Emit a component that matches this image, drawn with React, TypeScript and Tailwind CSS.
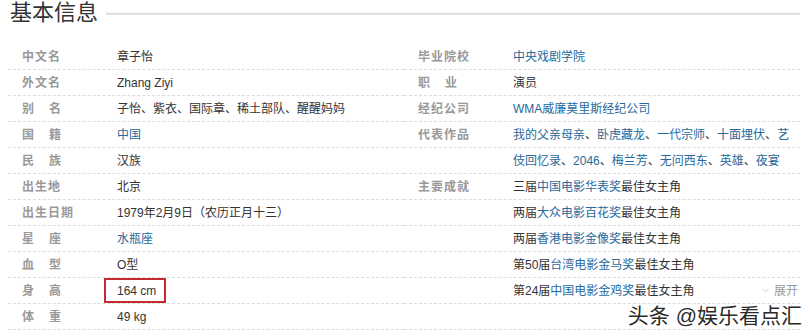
import { ChevronDown } from "lucide-react";
import type { ReactNode } from "react";

const font = { fontFamily: '"Liberation Sans", "Noto Sans CJK SC", sans-serif' };

function A({ children }: { children: ReactNode }) {
  return <span className="text-[#27699b]">{children}</span>;
}

function Label({ text }: { text: string }) {
  // two-char labels are spread to the width of three chars
  if (text.length === 2) {
    return (
      <div className="w-[95px] shrink-0">
        <div className="flex w-[39px] justify-between font-bold text-[#999]">
          <span>{text[0]}</span>
          <span>{text[1]}</span>
        </div>
      </div>
    );
  }
  return <div className="w-[95px] shrink-0 font-bold tracking-[1px] text-[#999]">{text}</div>;
}

function Row({ label, children }: { label?: string; children?: ReactNode }) {
  return (
    <div className="flex h-[26px] items-center border-b border-dashed border-[#dcdcdc] pl-[14px] text-[12px] text-[#333]">
      {label ? <Label text={label} /> : <div className="w-[95px] shrink-0" />}
      {children}
    </div>
  );
}

const left: [string, ReactNode][] = [
  ["中文名", "章子怡"],
  ["外文名", "Zhang Ziyi"],
  ["别名", "子怡、紫衣、国际章、稀土部队、醒醒妈妈"],
  ["国籍", <A>中国</A>],
  ["民族", "汉族"],
  ["出生地", "北京"],
  ["出生日期", "1979年2月9日（农历正月十三）"],
  ["星座", <A>水瓶座</A>],
  ["血型", "O型"],
  [
    "身高",
    <div className="relative flex h-[26px] items-center">
      164 cm
      <span className="absolute left-[-13px] top-0 h-[25px] w-[62px] border-2 border-[#c52a2e]" />
    </div>,
  ],
  ["体重", "49 kg"],
];

export default function App() {
  return (
    <div className="relative h-[336px] w-[810px] overflow-hidden bg-white" style={font}>
      <div className="flex h-[26px] items-center pl-[10px] pr-[10px]">
        <h2 className="text-[22px] leading-[26px] text-[#333]">基本信息</h2>
        <div className="ml-[8px] h-[3px] flex-1 border-b-2 border-t border-b-[#e0e0e0] border-t-[#f3f3f3]" />
      </div>

      <div className="mt-[18px] grid grid-cols-2 pl-[8px] pr-[10px]">
        <div>
          {left.map(([l, v]) => (
            <Row key={l} label={l}>
              {v}
            </Row>
          ))}
        </div>
        <div>
          <Row label="毕业院校">
            <A>中央戏剧学院</A>
          </Row>
          <Row label="职业">演员</Row>
          <Row label="经纪公司">
            <A>WMA威廉莫里斯经纪公司</A>
          </Row>
          <Row label="代表作品">
            <span>
              <A>我的父亲母亲</A>、<A>卧虎藏龙</A>、<A>一代宗师</A>、<A>十面埋伏</A>、<A>艺</A>
            </span>
          </Row>
          <Row>
            <span>
              <A>伎回忆录</A>、<A>2046</A>、<A>梅兰芳</A>、<A>无问西东</A>、<A>英雄</A>、<A>夜宴</A>
            </span>
          </Row>
          <Row label="主要成就">
            <span>
              三届<A>中国电影华表奖</A>最佳女主角
            </span>
          </Row>
          <Row>
            <span>
              两届<A>大众电影百花奖</A>最佳女主角
            </span>
          </Row>
          <Row>
            <span>
              两届<A>香港电影金像奖</A>最佳女主角
            </span>
          </Row>
          <Row>
            <span>
              第50届<A>台湾电影金马奖</A>最佳女主角
            </span>
          </Row>
          <Row>
            <span>
              第24届<A>中国电影金鸡奖</A>最佳女主角
            </span>
            <span className="ml-auto flex items-center gap-[3px] pr-[2px] text-[#999]">
              <ChevronDown size={11} strokeWidth={1.5} className="text-[#bbb]" />
              展开
            </span>
          </Row>
          <Row />
        </div>
      </div>

      <div
        className="absolute bottom-[7px] right-[8px] text-[21px] leading-[26px] text-[#2a2a2a]"
        style={{ textShadow: "0 0 2px #fff, 0 0 2px #fff" }}
      >
        头条 @娱乐看点汇
      </div>
    </div>
  );
}
